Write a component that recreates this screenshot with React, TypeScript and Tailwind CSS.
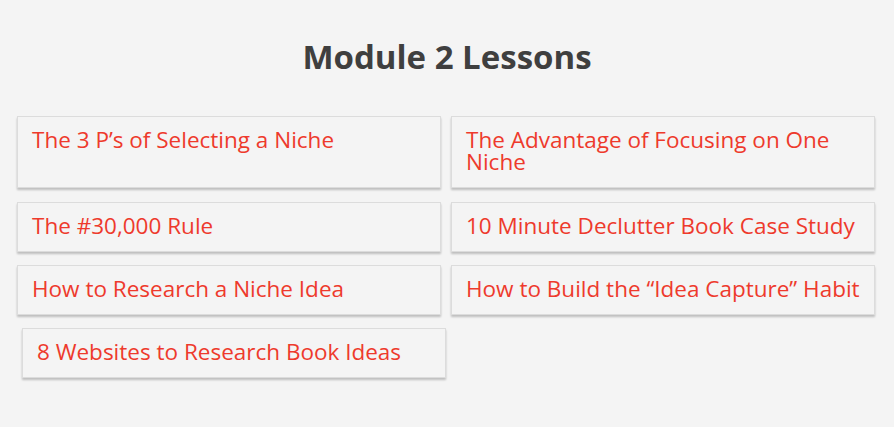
const lessons = [
  "The 3 P\u2019s of Selecting a Niche",
  "The Advantage of Focusing on One Niche",
  "The #30,000 Rule",
  "10 Minute Declutter Book Case Study",
  "How to Research a Niche Idea",
  "How to Build the \u201cIdea Capture\u201d Habit",
  "8 Websites to Research Book Ideas",
];

export default function App() {
  return (
    <div className="min-h-[427px] bg-[#f4f4f4] font-['Open_Sans',sans-serif]">
      <h1 className="pt-[38px] text-center text-[33px] leading-[38px] font-bold text-[#3f3f3f]">
        Module 2 Lessons
      </h1>

      <div className="mt-[40px] pl-[17px] grid grid-cols-[424px_424px] gap-x-[10px] gap-y-[13px]">
        {lessons.map((title, i) => (
          <a
            key={title}
            href="#"
            className={`block border border-[#dcdcdc] bg-[#f4f4f4] pt-[12px] pb-[14px] px-[14px] shadow-[0_2px_2px_rgba(0,0,0,0.22)] text-[22.5px] leading-[22px] text-[#ee3a2c] ${
              i < 2 ? "mb-[1px]" : ""
            } ${i === 6 ? "ml-[5px] w-[424px] justify-self-start" : ""}`}
          >
            {title}
          </a>
        ))}
      </div>
    </div>
  );
}
